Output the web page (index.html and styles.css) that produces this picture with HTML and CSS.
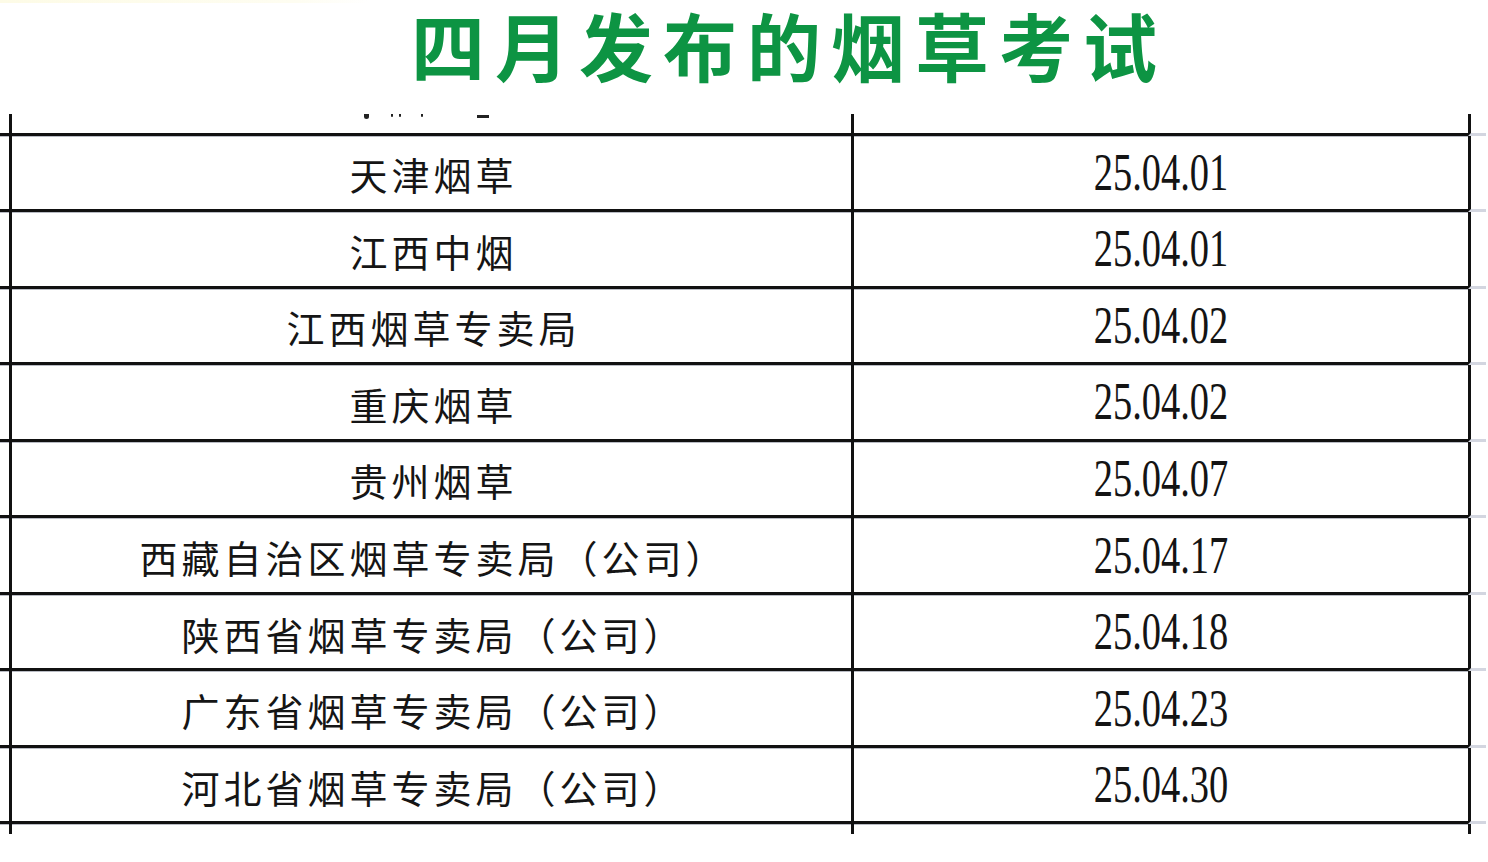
FILE: index.html
```html
<!DOCTYPE html>
<html lang="zh-CN">
<head>
<meta charset="utf-8">
<title>四月发布的烟草考试</title>
<link rel="stylesheet" href="styles.css">
</head>
<body>
<div class="page">
  <header class="header">
    <div class="tint"></div>
    <h1 class="title">四月发布的烟草考试</h1>
  </header>
  <div class="sheet">
    <div class="row partial">
      <div class="lead"></div>
      <div class="cell name"><i class="mark m1"></i><i class="mark m2"></i><i class="mark m3"></i><i class="mark m4"></i><i class="dash"></i></div>
      <div class="cell date"></div>
      <div class="stub"></div>
    </div>
    <div class="row">
      <div class="lead"></div>
      <div class="cell name"><span>天津烟草</span></div>
      <div class="cell date"><span>25.04.01</span></div>
      <div class="stub"></div>
    </div>
    <div class="row">
      <div class="lead"></div>
      <div class="cell name"><span>江西中烟</span></div>
      <div class="cell date"><span>25.04.01</span></div>
      <div class="stub"></div>
    </div>
    <div class="row">
      <div class="lead"></div>
      <div class="cell name"><span>江西烟草专卖局</span></div>
      <div class="cell date"><span>25.04.02</span></div>
      <div class="stub"></div>
    </div>
    <div class="row">
      <div class="lead"></div>
      <div class="cell name"><span>重庆烟草</span></div>
      <div class="cell date"><span>25.04.02</span></div>
      <div class="stub"></div>
    </div>
    <div class="row">
      <div class="lead"></div>
      <div class="cell name"><span>贵州烟草</span></div>
      <div class="cell date"><span>25.04.07</span></div>
      <div class="stub"></div>
    </div>
    <div class="row">
      <div class="lead"></div>
      <div class="cell name"><span>西藏自治区烟草专卖局（公司）</span></div>
      <div class="cell date"><span>25.04.17</span></div>
      <div class="stub"></div>
    </div>
    <div class="row">
      <div class="lead"></div>
      <div class="cell name"><span>陕西省烟草专卖局（公司）</span></div>
      <div class="cell date"><span>25.04.18</span></div>
      <div class="stub"></div>
    </div>
    <div class="row">
      <div class="lead"></div>
      <div class="cell name"><span>广东省烟草专卖局（公司）</span></div>
      <div class="cell date"><span>25.04.23</span></div>
      <div class="stub"></div>
    </div>
    <div class="row">
      <div class="lead"></div>
      <div class="cell name"><span>河北省烟草专卖局（公司）</span></div>
      <div class="cell date"><span>25.04.30</span></div>
      <div class="stub"></div>
    </div>
    <div class="row tail">
      <div class="lead"></div>
      <div class="cell name"></div>
      <div class="cell date"></div>
      <div class="stub"></div>
    </div>
  </div>
</div>
</body>
</html>
```
FILE: styles.css
```css
html, body {
  margin: 0;
  padding: 0;
  background: #ffffff;
}

.page {
  width: 1488px;
  height: 862px;
  overflow: hidden;
  background: #ffffff;
  font-family: "Noto Sans CJK SC", "Noto Sans", sans-serif;
}

.header {
  height: 114px;
  display: flex;
  flex-direction: column;
}

.tint {
  height: 3px;
  width: 370px;
  background: linear-gradient(to right, #fdfbe6, #fefdf1 80%, #ffffff);
}

.title {
  margin: 0;
  padding: 1px 0 0 90px;
  text-align: center;
  font-size: 74px;
  line-height: 80px;
  font-weight: 700;
  letter-spacing: 10px;
  color: #0d9443;
  white-space: nowrap;
}

.sheet {
  display: flex;
  flex-direction: column;
}

.row {
  display: grid;
  grid-template-columns: 9px 842px 617px 18px;
  height: 76.55px;
}

.row.partial {
  height: 21.5px;
}

.row.tail {
  height: 10px;
}

.lead,
.cell {
  box-sizing: border-box;
  border-bottom: 3px solid #111111;
  box-shadow: 0 1px 0 #b9bcc4;
}

.cell {
  border-left: 3px solid #111111;
  display: flex;
  align-items: center;
  justify-content: center;
  overflow: hidden;
}

.stub {
  box-sizing: border-box;
  border-left: 3px solid #111111;
  border-bottom: 3px solid #d3d6e0;
}

.row.tail .lead,
.row.tail .cell {
  border-bottom: none;
  box-shadow: none;
}

.row.tail .stub {
  border-bottom: none;
}

.name span {
  font-size: 38px;
  line-height: 46px;
  letter-spacing: 4px;
  padding-left: 4px;
  color: #151515;
  margin-top: 4px;
}

.partial .name {
  align-items: flex-start;
  justify-content: flex-start;
  padding-left: 352px;
  gap: 0;
}

.mark {
  display: block;
  width: 5px;
  height: 5px;
  background: #222;
  border-radius: 0 0 3px 3px;
  margin-right: 22px;
}

.mark.m2 {
  width: 2px;
  height: 3px;
  margin-right: 6px;
}

.mark.m3 {
  width: 2px;
  height: 3px;
  margin-right: 20px;
}

.mark.m4 {
  width: 2px;
  height: 3px;
  margin-right: 54px;
}

.dash {
  display: block;
  width: 12px;
  height: 3px;
  margin-top: 1px;
  background: #222;
}

.date span {
  display: inline-block;
  font-family: "Liberation Serif", "Times New Roman", serif;
  font-size: 52px;
  line-height: 56px;
  color: #141414;
  transform: scaleX(0.74);
  margin-top: 1px;
}
```
